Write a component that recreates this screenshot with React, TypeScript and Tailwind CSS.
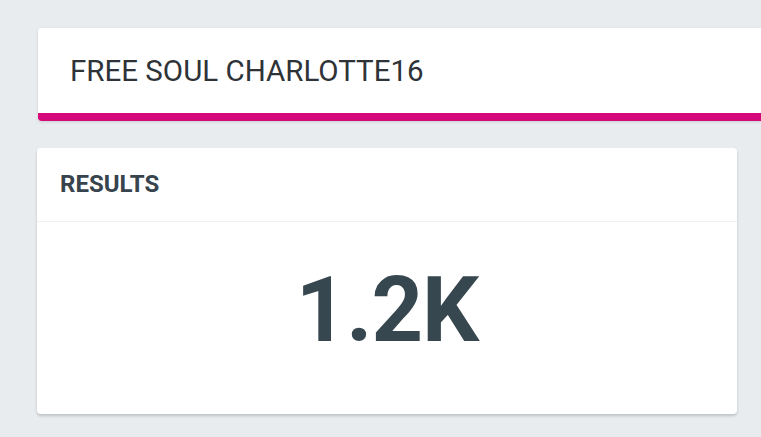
export default function App() {
  return (
    <div
      className="w-[761px] h-[437px] overflow-hidden bg-[#e9ecef]"
      style={{ fontFamily: 'Roboto, "Liberation Sans", sans-serif' }}
    >
      <div className="pl-[38px] pt-[28px]">
        <div className="w-[760px] bg-white rounded-[3px] shadow-[0_1px_3px_rgba(0,0,0,0.12)] overflow-hidden">
          <div className="h-[85px] pl-[32px] pt-[25px] text-[29.5px] leading-[36px] text-[#2e3338]">
            FREE SOUL CHARLOTTE16
          </div>
          <div className="h-[8px] bg-[#d6097b] rounded-b-[3px]" />
        </div>
      </div>
      <div className="pl-[37px] pt-[27px]">
        <div className="w-[700px] h-[266px] bg-white rounded-[4px] shadow-[0_2px_3px_rgba(0,0,0,0.18)] flex flex-col">
          <div className="h-[74px] border-b border-[#eef0f2] pl-[23px] pt-[22px] text-[24px] leading-[28px] font-bold text-[#37444d]">
            RESULTS
          </div>
          <div className="flex-1 flex justify-center pt-[34px]">
            <span className="text-[90px] leading-[110px] font-bold text-[#37474f] tracking-[-1px]">
              1.2K
            </span>
          </div>
        </div>
      </div>
    </div>
  );
}
